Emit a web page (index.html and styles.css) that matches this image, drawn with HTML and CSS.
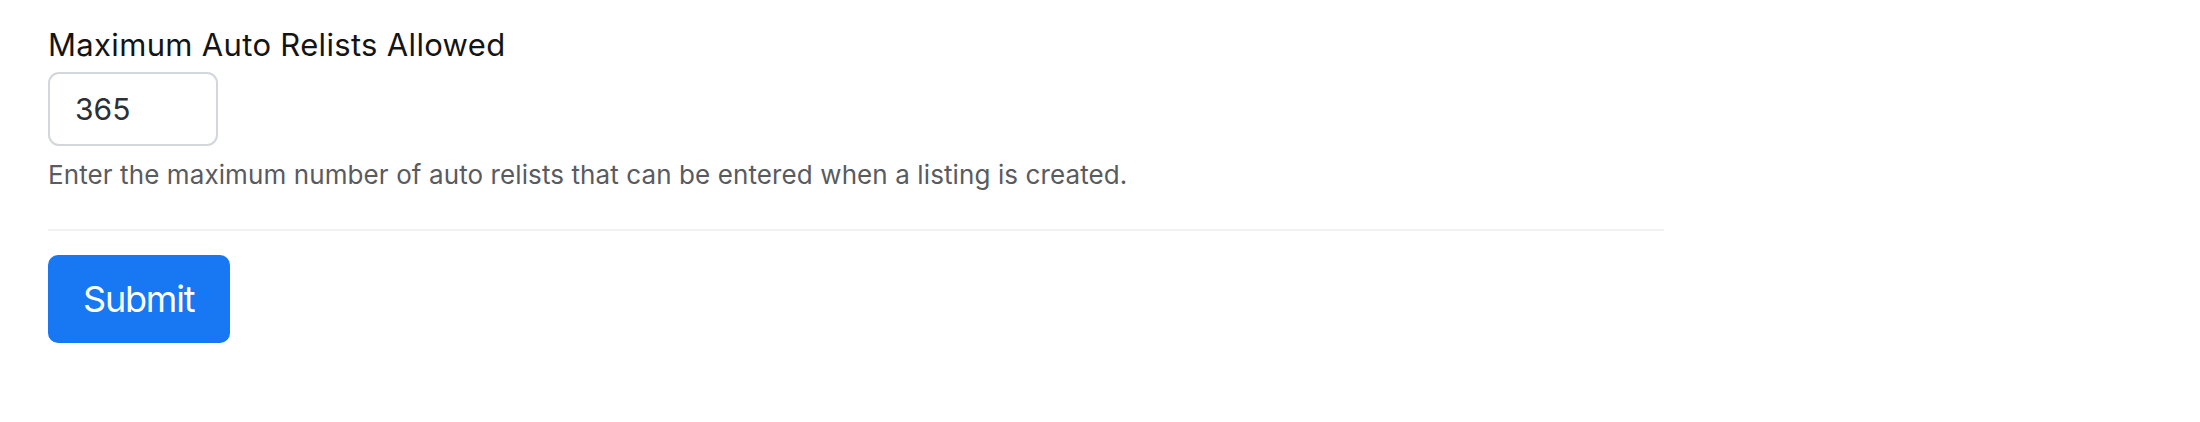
FILE: index.html
```html
<!DOCTYPE html>
<html lang="en">
<head>
<meta charset="utf-8">
<title>Settings</title>
<link rel="stylesheet" href="styles.css">
</head>
<body>
<form class="form">
  <div class="field">
    <label class="field-label" for="max-relists">Maximum Auto Relists Allowed</label>
    <input class="field-input" id="max-relists" type="text" value="365">
    <p class="field-help">Enter the maximum number of auto relists that can be entered when a listing is created.</p>
  </div>
  <hr class="divider">
  <div class="actions">
    <button class="btn-primary" type="button">Submit</button>
  </div>
</form>
</body>
</html>
```

FILE: styles.css
```css
html, body {
  margin: 0;
  padding: 0;
  background: #ffffff;
}
body {
  font-family: "Inter", "Liberation Sans", sans-serif;
}
.form {
  width: 1616px;
  padding: 25px 0 0 48px;
}
.field {
  display: flex;
  flex-direction: column;
  align-items: flex-start;
}
.field-label {
  font-size: 31px;
  line-height: 40px;
  color: #141414;
  letter-spacing: 0.33px;
}
.field-input {
  box-sizing: border-box;
  margin-top: 7px;
  width: 170px;
  height: 74px;
  padding: 0 25px;
  border: 2px solid #d3d6db;
  border-radius: 11px;
  font-family: inherit;
  font-size: 30px;
  color: #2b2f36;
  background: #fff;
  outline: none;
}
.field-help {
  margin: 11px 0 0;
  font-size: 26px;
  line-height: 36px;
  color: #595b5f;
  letter-spacing: 0.1px;
}
.divider {
  margin: 36px 0 0;
  border: 0;
  height: 2px;
  background: #f1f1f2;
}
.actions {
  margin-top: 24px;
}
.btn-primary {
  box-sizing: border-box;
  height: 88px;
  padding: 0 36px 0 35px;
  border: 0;
  border-radius: 10px;
  background: #1877f2;
  color: #ffffff;
  font-family: inherit;
  font-size: 36px;
  line-height: 1;
  letter-spacing: -1.2px;
}
```
